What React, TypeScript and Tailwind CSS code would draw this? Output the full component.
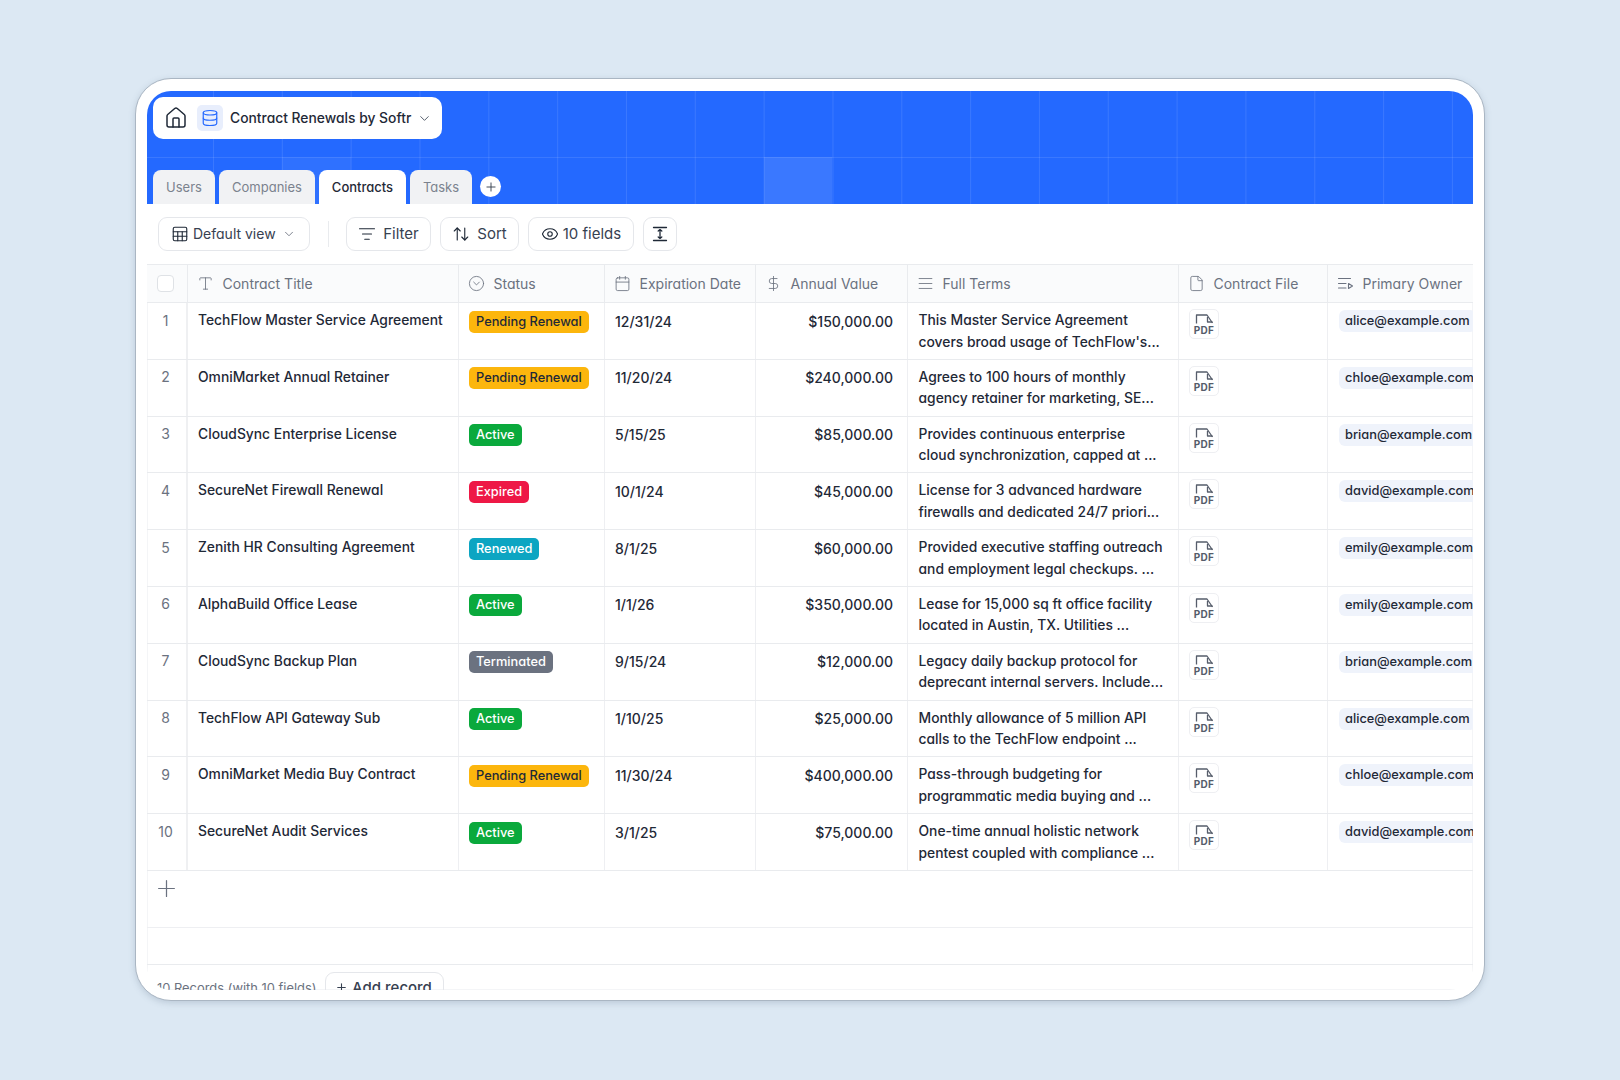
import { AlignJustify, ArrowUpDown, Calendar, ChevronDown, CircleChevronDown, Database, DollarSign, Eye, File, House, ListFilter, Plus, Sheet, Type } from 'lucide-react';
import type { ReactNode } from 'react';

const rows = [
  { title: 'TechFlow Master Service Agreement', status: 'Pending Renewal', date: '12/31/24', value: '$150,000.00', terms: ['This Master Service Agreement', "covers broad usage of TechFlow's..."], owner: 'alice@example.com' },
  { title: 'OmniMarket Annual Retainer', status: 'Pending Renewal', date: '11/20/24', value: '$240,000.00', terms: ['Agrees to 100 hours of monthly', 'agency retainer for marketing, SE...'], owner: 'chloe@example.com' },
  { title: 'CloudSync Enterprise License', status: 'Active', date: '5/15/25', value: '$85,000.00', terms: ['Provides continuous enterprise', 'cloud synchronization, capped at ...'], owner: 'brian@example.com' },
  { title: 'SecureNet Firewall Renewal', status: 'Expired', date: '10/1/24', value: '$45,000.00', terms: ['License for 3 advanced hardware', 'firewalls and dedicated 24/7 priori...'], owner: 'david@example.com' },
  { title: 'Zenith HR Consulting Agreement', status: 'Renewed', date: '8/1/25', value: '$60,000.00', terms: ['Provided executive staffing outreach', 'and employment legal checkups. ...'], owner: 'emily@example.com' },
  { title: 'AlphaBuild Office Lease', status: 'Active', date: '1/1/26', value: '$350,000.00', terms: ['Lease for 15,000 sq ft office facility', 'located in Austin, TX. Utilities ...'], owner: 'emily@example.com' },
  { title: 'CloudSync Backup Plan', status: 'Terminated', date: '9/15/24', value: '$12,000.00', terms: ['Legacy daily backup protocol for', 'deprecant internal servers. Include...'], owner: 'brian@example.com' },
  { title: 'TechFlow API Gateway Sub', status: 'Active', date: '1/10/25', value: '$25,000.00', terms: ['Monthly allowance of 5 million API', 'calls to the TechFlow endpoint ...'], owner: 'alice@example.com' },
  { title: 'OmniMarket Media Buy Contract', status: 'Pending Renewal', date: '11/30/24', value: '$400,000.00', terms: ['Pass-through budgeting for', 'programmatic media buying and ...'], owner: 'chloe@example.com' },
  { title: 'SecureNet Audit Services', status: 'Active', date: '3/1/25', value: '$75,000.00', terms: ['One-time annual holistic network', 'pentest coupled with compliance ...'], owner: 'david@example.com' },
];

const statusClass: Record<string, string> = {
  'Pending Renewal': 'bg-[#fcb60d] text-[#1f2937]',
  Active: 'bg-[#0aa93c] text-white',
  Expired: 'bg-[#ee1846] text-white',
  Renewed: 'bg-[#0ca5c2] text-white',
  Terminated: 'bg-[#6b7280] text-white',
};

function PrimaryFieldIcon() {
  return (
    <svg width="17" height="17" viewBox="0 0 17 17" fill="none" stroke="currentColor" strokeWidth="1.1" strokeLinecap="round" strokeLinejoin="round">
      <path d="M1.5 3.5h12M1.5 8.5h7.5M1.5 13h7.5" />
      <path d="M11.5 8.5l4 2.5-4 2.5z" />
    </svg>
  );
}

function RowHeightIcon() {
  return (
    <svg width="16" height="16" viewBox="0 0 16 16" fill="none" stroke="#1f2937" strokeWidth="1.3" strokeLinecap="round" strokeLinejoin="round">
      <path d="M1.5 1.5h13M1.5 14.5h13" />
      <path d="M8 4v8M6.2 5L8 3.6 9.8 5M6.2 11L8 12.4 9.8 11" />
    </svg>
  );
}

function PdfThumb() {
  return (
    <div className="flex h-[30px] w-[30px] flex-col items-center rounded-[5px] border border-[#eeeff2] pt-[4px]">
      <svg width="19" height="10" viewBox="0 0 19 10" fill="none" stroke="#565d6b" strokeWidth="1.3" strokeLinejoin="round">
        <path d="M1.5 9.5V1h10.5L17.5 9" />
        <path d="M12.5 3v5h5" />
      </svg>
      <span className="mt-[1px] text-[10px] leading-[10px] font-bold tracking-[0.3px] text-[#565d6b]">PDF</span>
    </div>
  );
}

function HeaderCell({ width, icon, label }: { width: string; icon: ReactNode; label: string }) {
  return (
    <div className={`flex h-full shrink-0 items-center gap-[9px] border-r border-[#e9ebee] pl-[8.5px] text-[14px] text-[#6b7280] ${width}`}>
      <span className="flex w-[17px] justify-center">{icon}</span>
      <span className="whitespace-nowrap">{label}</span>
    </div>
  );
}

function ToolButton({ width, children }: { width: string; children: ReactNode }) {
  return (
    <button className={`flex h-[34px] items-center justify-center rounded-[9px] border border-[#e5e7eb] bg-white text-[15px] text-[#374151] ${width}`}>
      {children}
    </button>
  );
}

export default function App() {
  return (
    <div className="h-[1080px] overflow-hidden bg-[#dce8f3] pt-[78px] font-['Inter',sans-serif] [font-feature-settings:'cv11']">
      <div className="mx-auto h-[923px] w-[1350px] rounded-[36px] border border-[#aab6c3] bg-white px-[11px] pb-[11px] pt-[12px] shadow-[0_2px_6px_rgba(90,110,135,0.25)]">
        <div className="flex h-[899px] flex-col overflow-hidden rounded-[24px]">
          <div className="relative h-[113px] shrink-0 bg-[#2469ff] bg-[linear-gradient(to_right,rgba(255,255,255,0.1)_1px,transparent_1px),linear-gradient(to_bottom,rgba(255,255,255,0.1)_1px,transparent_1px)] bg-size-[68.83px_68.83px] bg-position-[66px_66px] pl-[6px] pt-[6px]">
            <div className="absolute left-[616.6px] top-[66px] h-[47px] w-[68.83px] bg-white/10" />
            <div className="absolute left-[134.8px] top-[66px] h-[47px] w-[68.83px] bg-white/5" />
            <div className="relative flex h-[42px] w-[289px] items-center rounded-[10px] bg-white pl-[11px]">
              <House size={24} strokeWidth={1.5} className="text-[#1f2937]" />
              <span className="ml-[9px] flex h-[26px] w-[26px] items-center justify-center rounded-[5px] bg-[#e8eefc]">
                <Database size={18} strokeWidth={1.6} className="text-[#2469ff]" />
              </span>
              <span className="ml-[7px] whitespace-nowrap text-[13.85px] font-medium text-[#1f2937]">Contract Renewals by Softr</span>
              <ChevronDown size={15} strokeWidth={1.5} className="ml-[6px] text-[#4b5563]" />
            </div>
            <div className="relative mt-[31px] flex h-[34px] items-start gap-[4px]">
              <div className="flex h-[34px] w-[62px] items-center justify-center rounded-t-[8px] bg-[#f1f2f4] pt-[1px] text-[13px] text-[#7b828e]">Users</div>
              <div className="flex h-[34px] w-[96px] items-center justify-center rounded-t-[8px] bg-[#f1f2f4] pt-[1px] text-[13px] text-[#7b828e]">Companies</div>
              <div className="flex h-[34px] w-[87px] items-center justify-center rounded-t-[8px] bg-white pt-[1px] text-[13px] font-medium text-[#1f2937]">Contracts</div>
              <div className="flex h-[34px] w-[62px] items-center justify-center rounded-t-[8px] bg-[#f1f2f4] pt-[1px] text-[13px] text-[#7b828e]">Tasks</div>
              <div className="ml-[4px] mt-[6px] flex h-[21px] w-[21px] items-center justify-center rounded-full bg-white">
                <Plus size={14} strokeWidth={1.6} className="text-[#374151]" />
              </div>
            </div>
          </div>

          <div className="flex h-[60px] shrink-0 items-center pl-[11px]">
            <button className="flex h-[34px] w-[152px] items-center gap-[4px] rounded-[9px] border border-[#e5e7eb] bg-white pb-[1px] pl-[12px] text-[14px] text-[#374151]">
              <Sheet size={18} strokeWidth={1.5} className="text-[#1f2937]" />
              Default view
              <ChevronDown size={14} strokeWidth={1.5} className="ml-[2px] text-[#6b7280]" />
            </button>
            <div className="ml-[18px] h-[26px] w-px bg-[#e9ebee]" />
            <div className="ml-[17px] flex gap-[9px]">
              <ToolButton width="w-[85px] gap-[7px]">
                <ListFilter size={18} strokeWidth={1.5} className="text-[#1f2937]" />
                Filter
              </ToolButton>
              <ToolButton width="w-[79px] gap-[7px]">
                <ArrowUpDown size={18} strokeWidth={1.5} className="text-[#1f2937]" />
                Sort
              </ToolButton>
              <ToolButton width="w-[106px] gap-[4px]">
                <Eye size={18} strokeWidth={1.5} className="text-[#1f2937]" />
                10 fields
              </ToolButton>
              <ToolButton width="w-[34px]">
                <RowHeightIcon />
              </ToolButton>
            </div>
          </div>

          <div className="flex-1 overflow-hidden shadow-[inset_0_0_0_1px_#f4f5f7]">
            <div className="flex h-[39px] w-[1341px] items-center border-y border-[#e9ebee] bg-[#fafbfc]">
              <div className="flex h-full w-[41px] shrink-0 items-center border-r border-[#e9ebee] pl-[10px]">
                <div className="h-[17px] w-[17px] rounded-[4px] border border-[#dfe2e6] bg-white" />
              </div>
              <HeaderCell width="w-[271px]" icon={<Type size={17} strokeWidth={1.2} />} label="Contract Title" />
              <HeaderCell width="w-[146px]" icon={<CircleChevronDown size={17} strokeWidth={1.2} />} label="Status" />
              <HeaderCell width="w-[151px]" icon={<Calendar size={17} strokeWidth={1.2} />} label="Expiration Date" />
              <HeaderCell width="w-[152px]" icon={<DollarSign size={17} strokeWidth={1.2} />} label="Annual Value" />
              <HeaderCell width="w-[271px]" icon={<AlignJustify size={17} strokeWidth={1.2} />} label="Full Terms" />
              <HeaderCell width="w-[149px]" icon={<File size={17} strokeWidth={1.2} />} label="Contract File" />
              <HeaderCell width="w-[160px]" icon={<PrimaryFieldIcon />} label="Primary Owner" />
            </div>

            {rows.map((row, i) => (
              <div key={row.title} className="flex h-[56.8px] w-[1341px] border-b border-[#e9ebee] text-[13.85px] font-medium leading-[21.5px] text-[#1f2937]">
                <div className="w-[41px] shrink-0 border-r-2 border-[#eff0f2] pr-[2px] pt-[6.5px] text-center text-[14px] font-normal text-[#6b7280]">{i + 1}</div>
                <div className="w-[271px] shrink-0 border-r border-[#eeeff2] pl-[10px] pt-[7px] whitespace-nowrap">{row.title}</div>
                <div className="w-[146px] shrink-0 border-r border-[#eeeff2] pl-[10px] pt-[7.5px]">
                  <span className={`inline-block h-[22px] rounded-[5px] px-[7px] text-[12.8px] leading-[22px] ${statusClass[row.status]}`}>{row.status}</span>
                </div>
                <div className="w-[151px] shrink-0 border-r border-[#eeeff2] pl-[10px] pt-[7.5px] text-[14px]">{row.date}</div>
                <div className="w-[152px] shrink-0 border-r border-[#eeeff2] pr-[14px] pt-[7.5px] text-right text-[14px]">{row.value}</div>
                <div className="w-[271px] shrink-0 border-r border-[#eeeff2] pl-[10.5px] pt-[7px] whitespace-nowrap">
                  {row.terms[0]}
                  <br />
                  {row.terms[1]}
                </div>
                <div className="w-[149px] shrink-0 border-r border-[#eeeff2] pl-[10px] pt-[6px]">
                  <PdfThumb />
                </div>
                <div className="w-[160px] shrink-0 pl-[11px] pt-[7px]">
                  <span className="inline-block h-[22px] rounded-[6px] bg-[#eff3fb] px-[6px] text-[12.85px] leading-[21px] whitespace-nowrap">{row.owner}</span>
                </div>
              </div>
            ))}

            <div className="h-[57px] border-b border-[#eeeff2] pl-[5.5px] pt-[4.5px]">
              <Plus size={27} strokeWidth={1.1} className="text-[#6b7280]" />
            </div>
            <div className="h-[37px] border-b border-[#e9ebee]" />
            <div className="flex items-start pl-[10px] pt-[7px]">
              <span className="mt-[7px] text-[12.9px] text-[#6b7280]">10 Records (with 10 fields)</span>
              <button className="ml-[9px] flex h-[34px] w-[119px] items-center justify-center gap-[4px] rounded-[9px] border border-[#e5e7eb] pb-[2px] pr-[3px] text-[15px] font-medium text-[#374151]">
                <Plus size={13} />
                Add record
              </button>
            </div>
          </div>
        </div>
      </div>
    </div>
  );
}
